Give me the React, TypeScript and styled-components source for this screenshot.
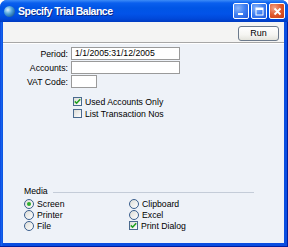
import styled, { createGlobalStyle } from "styled-components";

const Global = createGlobalStyle`
  html, body {
    margin: 0;
    padding: 0;
    background: #ffffff;
  }
  body {
    font-family: "Liberation Sans", Arial, sans-serif;
    font-size: 9px;
    color: #000;
  }
`;

const Window = styled.div`
  width: 288px;
  height: 247px;
  box-sizing: border-box;
  display: flex;
  flex-direction: column;
  background: linear-gradient(to right, #0831d9 0, #166aee 1px, #0a4ee0 3px);
  border-radius: 7px 7px 0 0;
  overflow: hidden;
  padding: 0 4px 4px 3px;
  box-shadow: inset -1px -1px 0 #001ea0;
`;

const TitleBar = styled.div`
  height: 22px;
  margin: 0 -4px 0 -3px;
  padding: 0 3px 0 4px;
  display: flex;
  align-items: center;
  background: linear-gradient(
    to bottom,
    #3d8cf7 0,
    #0a5fee 3px,
    #0055e5 8px,
    #0253e8 14px,
    #0047d8 19px,
    #003bc0 22px
  );
`;

const AppIcon = styled.div`
  width: 11px;
  height: 11px;
  border-radius: 50%;
  background: radial-gradient(circle at 35% 35%, #d9f0ff 0, #4fa4dc 40%, #1a5b9a 80%);
  margin-right: 3px;
  flex-shrink: 0;
`;

const Title = styled.span`
  color: #fff;
  font-family: "Liberation Sans", Arial, sans-serif;
  font-weight: bold;
  font-size: 10.5px;
  letter-spacing: -0.5px;
  text-shadow: 1px 1px 0 #0a2a8a;
  flex: 1;
`;

const CaptionButtons = styled.div`
  display: flex;
  gap: 2px;
`;

const CaptionButton = styled.div<{ $close?: boolean }>`
  width: 16px;
  height: 16px;
  box-sizing: border-box;
  border: 1px solid #fff;
  border-radius: 2px;
  display: flex;
  align-items: center;
  justify-content: center;
  background: ${(p) =>
    p.$close
      ? "radial-gradient(circle at 30% 30%, #f4a48a 0, #e0582c 50%, #c63a10 100%)"
      : "radial-gradient(circle at 30% 30%, #8ab4fa 0, #3c7ef2 50%, #2358d8 100%)"};
`;

const Pane = styled.div`
  flex: 1;
  display: flex;
  flex-direction: column;
  background: #eef2f8;
`;

const Toolbar = styled.div`
  height: 20px;
  display: flex;
  align-items: center;
  justify-content: flex-end;
  padding-right: 5px;
  background: #f4f4f3;
  border-bottom: 1px solid #a7a7a7;
  box-shadow: 0 1px 0 #ffffff;
`;

const RunButton = styled.div`
  width: 41px;
  height: 15px;
  box-sizing: border-box;
  border: 1px solid #6c7a8c;
  border-radius: 3px;
  background: linear-gradient(to bottom, #ffffff 0, #f5f5f2 60%, #e3e3dc 100%);
  display: flex;
  align-items: center;
  justify-content: center;
  font-size: 9px;
  margin-top: 2px;
`;

const Form = styled.div`
  display: grid;
  grid-template-columns: 65px auto;
  column-gap: 3px;
  row-gap: 1px;
  padding: 4px 0 0 0;
  align-items: center;
`;

const Label = styled.label`
  text-align: right;
  font-size: 8.7px;
`;

const Field = styled.div<{ $w: number }>`
  width: ${(p) => p.$w}px;
  height: 13px;
  box-sizing: border-box;
  background: #fff;
  border: 1px solid #9a9a9a;
  font-size: 8.7px;
  line-height: 11px;
  padding-left: 3px;
`;

const Options = styled.div`
  display: flex;
  flex-direction: column;
  gap: 3px;
  padding: 9px 0 0 70px;
`;

const Check = styled.div`
  display: flex;
  align-items: center;
  gap: 3px;
  font-size: 8.7px;
  height: 9px;
`;

const Box = styled.div`
  width: 9px;
  height: 9px;
  box-sizing: border-box;
  border: 1px solid #4a6a8e;
  background: linear-gradient(135deg, #dcdcd6 0, #ffffff 100%);
  display: flex;
  align-items: center;
  justify-content: center;
`;

const Media = styled.div`
  margin-top: auto;
  padding: 0 30px 12px 21px;
`;

const GroupHead = styled.div`
  display: flex;
  align-items: center;
  gap: 5px;
  font-size: 8.7px;
  height: 10px;
`;

const GroupRule = styled.div`
  flex: 1;
  height: 1px;
  background: #c4ccd8;
  margin-top: 3px;
`;

const Grid = styled.div`
  display: grid;
  grid-template-columns: 105px auto;
  row-gap: 1px;
  margin-top: 3px;
`;

const Option = styled.div`
  display: flex;
  align-items: center;
  gap: 3px;
  height: 10px;
  font-size: 8.7px;
`;

const Radio = styled.div<{ $on?: boolean }>`
  width: 10px;
  height: 10px;
  box-sizing: border-box;
  border-radius: 50%;
  border: 1px solid #3a5e8c;
  background: linear-gradient(135deg, #dcdcd6 0, #ffffff 100%);
  display: flex;
  align-items: center;
  justify-content: center;
  &::after {
    content: "";
    display: ${(p) => (p.$on ? "block" : "none")};
    width: 4px;
    height: 4px;
    border-radius: 50%;
    background: #2fae2f;
  }
`;

function Tick() {
  return (
    <svg width="7" height="7" viewBox="0 0 7 7">
      <path d="M0.8 3.4 L2.6 5.2 L6.2 1.2" fill="none" stroke="#21a121" strokeWidth="1.6" />
    </svg>
  );
}

function CheckOption({ on, children }: { on?: boolean; children: string }) {
  return (
    <Check>
      <Box>{on && <Tick />}</Box>
      {children}
    </Check>
  );
}

export default function App() {
  return (
    <>
      <Global />
      <Window>
        <TitleBar>
          <AppIcon />
          <Title>Specify Trial Balance</Title>
          <CaptionButtons>
            <CaptionButton>
              <svg width="9" height="9" viewBox="0 0 9 9">
                <rect x="1" y="6" width="5" height="2" fill="#fff" />
              </svg>
            </CaptionButton>
            <CaptionButton>
              <svg width="9" height="9" viewBox="0 0 9 9">
                <rect x="1" y="1" width="7" height="7" fill="none" stroke="#fff" strokeWidth="1" />
                <rect x="1" y="1" width="7" height="2" fill="#fff" />
              </svg>
            </CaptionButton>
            <CaptionButton $close>
              <svg width="9" height="9" viewBox="0 0 9 9">
                <path d="M1.5 1.5 L7.5 7.5 M7.5 1.5 L1.5 7.5" stroke="#fff" strokeWidth="1.8" />
              </svg>
            </CaptionButton>
          </CaptionButtons>
        </TitleBar>
        <Pane>
          <Toolbar>
            <RunButton>Run</RunButton>
          </Toolbar>
          <Form>
            <Label>Period:</Label>
            <Field $w={109}>1/1/2005:31/12/2005</Field>
            <Label>Accounts:</Label>
            <Field $w={109} />
            <Label>VAT Code:</Label>
            <Field $w={26} />
          </Form>
          <Options>
            <CheckOption on>Used Accounts Only</CheckOption>
            <CheckOption>List Transaction Nos</CheckOption>
          </Options>
          <Media>
            <GroupHead>
              Media
              <GroupRule />
            </GroupHead>
            <Grid>
              <Option>
                <Radio $on />
                Screen
              </Option>
              <Option>
                <Radio />
                Clipboard
              </Option>
              <Option>
                <Radio />
                Printer
              </Option>
              <Option>
                <Radio />
                Excel
              </Option>
              <Option>
                <Radio />
                File
              </Option>
              <Check>
                <Box>
                  <Tick />
                </Box>
                Print Dialog
              </Check>
            </Grid>
          </Media>
        </Pane>
      </Window>
    </>
  );
}
